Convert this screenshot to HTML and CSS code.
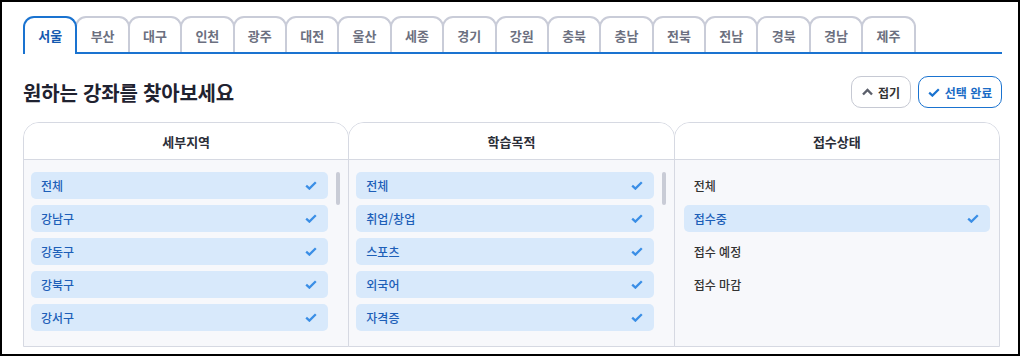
FILE: index.html
```html
<!DOCTYPE html>
<html lang="ko">
<head>
<meta charset="utf-8">
<link rel="stylesheet" href="styles.css">
</head>
<body>
<div class="frame">
  <nav class="tabs">
    <span class="tab active">서울</span>
    <span class="tab">부산</span>
    <span class="tab">대구</span>
    <span class="tab">인천</span>
    <span class="tab">광주</span>
    <span class="tab">대전</span>
    <span class="tab">울산</span>
    <span class="tab">세종</span>
    <span class="tab">경기</span>
    <span class="tab">강원</span>
    <span class="tab">충북</span>
    <span class="tab">충남</span>
    <span class="tab">전북</span>
    <span class="tab">전남</span>
    <span class="tab">경북</span>
    <span class="tab">경남</span>
    <span class="tab">제주</span>
  </nav>

  <div class="head">
    <h1 class="title">원하는 강좌를 찾아보세요</h1>
    <div class="actions">
      <button class="btn btn-fold">
        <svg class="ico" width="11" height="8" viewBox="0 0 11 8"><path d="M1 6.5 L5.5 2 L10 6.5" fill="none" stroke="#5b5f6b" stroke-width="2.4" stroke-linejoin="miter"/></svg>
        접기
      </button>
      <button class="btn btn-done">
        <svg class="ico" width="12" height="9" viewBox="0 0 12 9"><path d="M1.2 4.6 L4.4 7.6 L10.8 1.2" fill="none" stroke="#1a73d0" stroke-width="2.2"/></svg>
        선택 완료
      </button>
    </div>
  </div>

  <div class="panel">
    <section class="col">
      <div class="col-head">세부지역</div>
      <div class="col-body">
        <ul class="list">
          <li class="item on">전체<svg class="chk" viewBox="0 0 12 9"><path d="M1.2 4.6 L4.4 7.6 L10.8 1.2"/></svg></li>
          <li class="item on">강남구<svg class="chk" viewBox="0 0 12 9"><path d="M1.2 4.6 L4.4 7.6 L10.8 1.2"/></svg></li>
          <li class="item on">강동구<svg class="chk" viewBox="0 0 12 9"><path d="M1.2 4.6 L4.4 7.6 L10.8 1.2"/></svg></li>
          <li class="item on">강북구<svg class="chk" viewBox="0 0 12 9"><path d="M1.2 4.6 L4.4 7.6 L10.8 1.2"/></svg></li>
          <li class="item on">강서구<svg class="chk" viewBox="0 0 12 9"><path d="M1.2 4.6 L4.4 7.6 L10.8 1.2"/></svg></li>
        </ul>
        <div class="scroll"><div class="thumb"></div></div>
      </div>
    </section>
    <section class="col">
      <div class="col-head">학습목적</div>
      <div class="col-body">
        <ul class="list">
          <li class="item on">전체<svg class="chk" viewBox="0 0 12 9"><path d="M1.2 4.6 L4.4 7.6 L10.8 1.2"/></svg></li>
          <li class="item on">취업/창업<svg class="chk" viewBox="0 0 12 9"><path d="M1.2 4.6 L4.4 7.6 L10.8 1.2"/></svg></li>
          <li class="item on">스포츠<svg class="chk" viewBox="0 0 12 9"><path d="M1.2 4.6 L4.4 7.6 L10.8 1.2"/></svg></li>
          <li class="item on">외국어<svg class="chk" viewBox="0 0 12 9"><path d="M1.2 4.6 L4.4 7.6 L10.8 1.2"/></svg></li>
          <li class="item on">자격증<svg class="chk" viewBox="0 0 12 9"><path d="M1.2 4.6 L4.4 7.6 L10.8 1.2"/></svg></li>
        </ul>
        <div class="scroll"><div class="thumb"></div></div>
      </div>
    </section>
    <section class="col">
      <div class="col-head">접수상태</div>
      <div class="col-body wide">
        <ul class="list">
          <li class="item">전체</li>
          <li class="item on">접수중<svg class="chk" viewBox="0 0 12 9"><path d="M1.2 4.6 L4.4 7.6 L10.8 1.2"/></svg></li>
          <li class="item">접수 예정</li>
          <li class="item">접수 마감</li>
        </ul>
      </div>
    </section>
  </div>
</div>
</body>
</html>
```

FILE: styles.css
```css
* { box-sizing: border-box; }
html, body { margin: 0; padding: 0; background: #fff; }
body {
  font-family: "Noto Sans CJK KR", "Noto Sans", sans-serif;
  color: #222;
}
.frame {
  width: 1020px;
  height: 356px;
  border: 2px solid #000;
  padding: 14px 16px 0 21px;
  overflow: hidden;
}

/* tabs */
.tabs {
  display: flex;
  align-items: flex-end;
  height: 38px;
  border-bottom: 2px solid #1a73d0;
}
.tab {
  width: 54.4px;
  height: 36px;
  margin-right: -2px;
  border: 2px solid #c9ccd8;
  border-bottom: none;
  border-radius: 11px 11px 0 0;
  background: #fff;
  display: flex;
  align-items: center;
  justify-content: center;
  font-size: 13px;
  font-weight: 700;
  color: #6c7080;
  padding-top: 1px;
  position: relative;
}
.tab.active {
  border-color: #1a73d0;
  color: #1559b0;
  height: 38px;
  margin-bottom: -2px;
  padding-bottom: 2px;
  z-index: 2;
}

/* heading row */
.head {
  display: flex;
  align-items: center;
  justify-content: space-between;
  margin-top: 22px;
  height: 32px;
}
.title {
  margin: 0;
  font-size: 20px;
  font-weight: 700;
  color: #1f2230;
  letter-spacing: -0.2px;
}
.actions { display: flex; gap: 7px; }
.btn {
  height: 32px;
  border-radius: 10px;
  background: #fff;
  font-family: inherit;
  font-size: 12px;
  font-weight: 700;
  display: flex;
  align-items: center;
  justify-content: center;
  gap: 5px;
  padding: 0;
  cursor: pointer;
}
.btn-fold {
  width: 60px;
  border: 1px solid #c6c9d3;
  color: #333;
}
.btn-done {
  width: 84px;
  border: 1px solid #1a73d0;
  color: #1a6cc6;
}

/* panel */
.panel {
  display: flex;
  margin-top: 14px;
  margin-right: 2px;
  height: 225px;
}
.col {
  flex: 1;
  display: flex;
  flex-direction: column;
  border: 1px solid #d6d9e2;
  border-radius: 16px 16px 0 0;
  background: #f7f8fb;
  overflow: hidden;
}
.col + .col { margin-left: -1px; }
.col-head {
  height: 37px;
  flex: none;
  background: #fff;
  border-bottom: 1px solid #d6d9e2;
  display: flex;
  align-items: center;
  justify-content: center;
  font-size: 13px;
  font-weight: 700;
  color: #2b2e38;
}
.col-body {
  flex: 1;
  display: flex;
  padding: 12px 0 0 7px;
}
.col-body.wide { padding: 12px 9px 0 9px; }
.list {
  list-style: none;
  margin: 0;
  padding: 0;
  flex: 1;
  display: flex;
  flex-direction: column;
  gap: 6px;
}
.item {
  height: 27px;
  border-radius: 5px;
  display: flex;
  align-items: center;
  justify-content: space-between;
  padding: 0 11px 0 10px;
  font-size: 12px;
  font-weight: 500;
  color: #333;
}
.item.on {
  background: #d8e9fb;
  color: #1d5fb8;
}
.chk {
  width: 12px;
  height: 9px;
  fill: none;
  stroke: #3a8ee6;
  stroke-width: 2.3;
}
.scroll {
  width: 4px;
  margin: 0 8px 0 8px;
}
.thumb {
  width: 4px;
  height: 33px;
  border-radius: 2px;
  background: #c9ccd6;
}
```
